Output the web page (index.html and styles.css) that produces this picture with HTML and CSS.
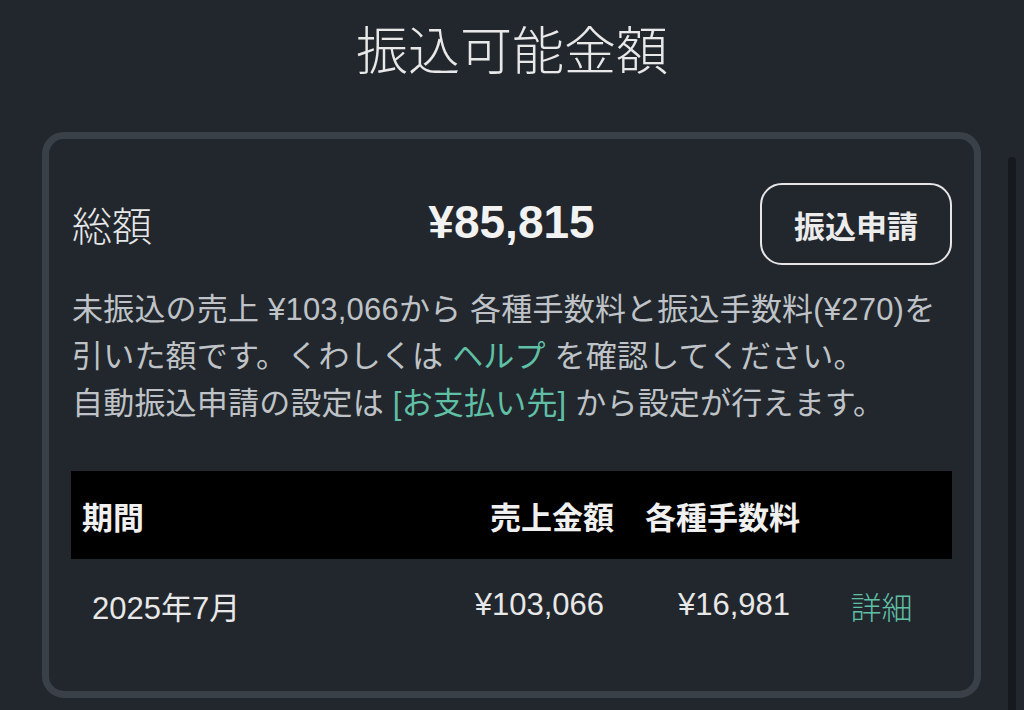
FILE: index.html
```html
<!DOCTYPE html>
<html lang="ja">
<head>
    <meta charset="UTF-8">
    <title>振込可能金額</title>
    <link rel="stylesheet" href="styles.css">
</head>
<body>
    <main class="page">
        <h1 class="pageTitle">振込可能金額</h1>

        <section class="payoutCard">
            <div class="totalRow">
                <span class="totalLabel">総額</span>
                <span class="totalAmount">¥85,815</span>
                <button class="payoutButton">振込申請</button>
            </div>

            <p class="note">
                未振込の売上 ¥103,066から 各種手数料と振込手数料(¥270)を<br>
                引いた額です。くわしくは <a href="#" class="link">ヘルプ</a> を確認してください。<br>
                自動振込申請の設定は <a href="#" class="link">[お支払い先]</a> から設定が行えます。
            </p>

            <div class="salesTable">
                <div class="tableHead">
                    <span class="cell">期間</span>
                    <span class="cell num">売上金額</span>
                    <span class="cell num">各種手数料</span>
                    <span class="cell"></span>
                </div>
                <div class="tableRow">
                    <span class="cell">2025年7月</span>
                    <span class="cell num">¥103,066</span>
                    <span class="cell num">¥16,981</span>
                    <a href="#" class="cell link detail">詳細</a>
                </div>
            </div>
        </section>
    </main>
    <div class="scrollThumb"></div>
</body>
</html>
```

FILE: styles.css
```css
body {
    margin: 0;
    background-color: #22272d;
    color: #e6e7e8;
    font-family: "Liberation Sans", "Noto Sans CJK JP", sans-serif;
    height: 710px;
    overflow: hidden;
}

.page {
    padding-top: 12px;
}

.pageTitle {
    margin: 0;
    text-align: center;
    font-family: "Noto Sans CJK JP", sans-serif;
    font-size: 52px;
    font-weight: 300;
    line-height: 72px;
    color: #e8e8e8;
}

.payoutCard {
    margin: 48px 43px 0 42px;
    border: 7px solid #3a4047;
    border-radius: 22px;
    padding: 44px 22px 40px 22px;
}

.totalRow {
    display: grid;
    grid-template-columns: 1fr auto 1fr;
    align-items: center;
    height: 82px;
}
.totalLabel {
    padding-left: 1px;
    font-family: "Noto Sans CJK JP", sans-serif;
    font-size: 40px;
    font-weight: 300;
}
.totalAmount {
    font-size: 46px;
    font-weight: bold;
    color: #f2f2f2;
    margin-top: -4px;
}
.payoutButton {
    justify-self: end;
    width: 192px;
    height: 82px;
    background: transparent;
    border: 2px solid #e6e6e6;
    border-radius: 22px;
    color: #ececec;
    font-family: "Noto Sans CJK JP", sans-serif;
    font-size: 31px;
    font-weight: bold;
}

.note {
    margin: 21px 0 0 1px;
    font-size: 31px;
    letter-spacing: 0.2px;
    line-height: 47px;
    color: #bfc3c7;
}
.link {
    color: #5fc0a6;
    text-decoration: none;
}

.salesTable {
    margin-top: 44px;
}
.tableHead, .tableRow {
    display: grid;
    grid-template-columns: 1fr 186px 186px 141px;
    align-items: center;
}
.tableHead {
    height: 88px;
    background-color: #000;
    font-family: "Noto Sans CJK JP", sans-serif;
    font-size: 31px;
    font-weight: bold;
    color: #f0f0f0;
}
.tableHead .cell {
    padding: 0 11px;
}
.tableRow {
    height: 92px;
    font-size: 31px;
    color: #e8e8e8;
}
.tableRow .cell {
    padding: 0 21px;
}
.num {
    text-align: right;
}
.tableRow .detail {
    text-align: center;
    padding: 0;
    font-family: "Noto Sans CJK JP", sans-serif;
    font-weight: 300;
}

.scrollThumb {
    position: absolute;
    top: 157px;
    left: 1008px;
    width: 8px;
    height: 560px;
    border-radius: 4px;
    background-color: #16191d;
}
```
